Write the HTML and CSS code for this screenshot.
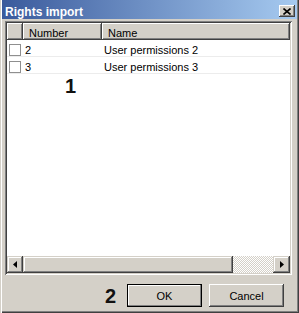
FILE: index.html
```
<!DOCTYPE html>
<html lang="en">
<head>
  <meta charset="UTF-8">
  <title>Rights import</title>
  <link rel="stylesheet" href="styles.css">
</head>
<body>
  <div class="window">
    <div class="titlebar">
      <span class="title">Rights import</span>
      <button class="close" aria-label="Close">
        <svg width="8" height="7" viewBox="0 0 8 7">
          <path d="M0.5 0.5L7.5 6.5M7.5 0.5L0.5 6.5" stroke="#000" stroke-width="1.6" fill="none"/>
        </svg>
      </button>
    </div>

    <div class="content">
      <div class="listview">
        <div class="lv-header">
          <div class="lv-col"></div>
          <div class="lv-col">Number</div>
          <div class="lv-col">Name</div>
        </div>

        <div class="lv-rows">
          <div class="lv-row">
            <span class="cell"><span class="checkbox"></span></span>
            <span class="cell">2</span>
            <span class="cell">User permissions 2</span>
          </div>
          <div class="lv-row">
            <span class="cell"><span class="checkbox"></span></span>
            <span class="cell">3</span>
            <span class="cell">User permissions 3</span>
          </div>
        </div>

        <div class="hscroll">
          <div class="sb-btn">
            <svg width="4" height="7" viewBox="0 0 4 7"><polygon points="4,0 4,7 0,3.5" fill="#000"/></svg>
          </div>
          <div class="sb-thumb"></div>
          <div class="sb-track"></div>
          <div class="sb-btn sb-right">
            <svg width="4" height="7" viewBox="0 0 4 7"><polygon points="0,0 0,7 4,3.5" fill="#000"/></svg>
          </div>
        </div>

        <span class="marker marker-list">1</span>
      </div>

      <div class="footer">
        <span class="marker marker-footer">2</span>
        <button class="btn btn-default">OK</button>
        <button class="btn">Cancel</button>
      </div>
    </div>
  </div>
</body>
</html>
```

FILE: styles.css
```
*, *::before, *::after {
  box-sizing: border-box;
}

body {
  margin: 0;
  font-family: "Liberation Sans", Arial, sans-serif;
  font-size: 11px;
  color: #000;
}

/* window frame */
.window {
  width: 299px;
  height: 313px;
  background: #d4d0c8;
  display: flex;
  flex-direction: column;
  padding: 0 2px 2px 2px;
  box-shadow: inset 1px 0 #d4d0c8, inset 2px 0 #fff,
              inset -1px -1px #404040, inset -2px -2px #808080;
}

.titlebar {
  height: 19px;
  flex: none;
  display: flex;
  align-items: flex-start;
  padding-left: 3px;
  background: linear-gradient(to right, #3a5a9c, #a6caf0);
}

.title {
  flex: 1;
  color: #fff;
  font-weight: bold;
  font-size: 12px;
  line-height: 14px;
  padding-top: 5px;
}

.close {
  width: 16px;
  height: 12px;
  margin: 5px 2px 0 0;
  padding: 0;
  border: none;
  background: #d4d0c8;
  display: flex;
  align-items: center;
  justify-content: center;
  box-shadow: inset -1px -1px #404040, inset 1px 1px #fff, inset -2px -2px #808080;
}

.close svg {
  display: block;
}

.content {
  flex: 1;
  display: flex;
  flex-direction: column;
  padding: 2px 5px 0 3px;
}

/* list view */
.listview {
  position: relative;
  height: 254px;
  flex: none;
  display: flex;
  flex-direction: column;
  padding: 2px;
  background: #fff;
  box-shadow: inset 1px 1px #808080, inset -1px -1px #fff,
              inset 2px 2px #404040, inset -2px -2px #d4d0c8;
}

.lv-header,
.lv-row {
  display: grid;
  grid-template-columns: 16px 79px 1fr;
}

.lv-header {
  height: 17px;
  flex: none;
}

.lv-col {
  background: #d4d0c8;
  padding: 3px 0 0 6px;
  line-height: 14px;
  white-space: nowrap;
  box-shadow: inset -1px -1px #404040, inset 1px 1px #fff, inset -2px -2px #808080;
}

.lv-rows {
  flex: 1;
}

.lv-row {
  height: 17px;
  border-bottom: 1px solid #ececec;
  line-height: 14px;
}

.cell {
  padding: 3px 0 0 2px;
  white-space: nowrap;
}

.checkbox {
  display: block;
  width: 12px;
  height: 12px;
  margin: 1px 0 0 0;
  border: 1px solid #8f8f8f;
  background: #fff;
}

/* horizontal scrollbar */
.hscroll {
  height: 17px;
  flex: none;
  display: flex;
}

.sb-btn,
.sb-thumb {
  background: #d4d0c8;
  box-shadow: inset -1px -1px #404040, inset 1px 1px #d4d0c8,
              inset -2px -2px #808080, inset 2px 2px #fff;
}

.sb-btn {
  width: 16px;
  display: flex;
  align-items: center;
  justify-content: center;
}

.sb-right {
  width: 17px;
}

.sb-btn svg {
  display: block;
}

.sb-thumb {
  width: 210px;
}

.sb-track {
  flex: 1;
  background-color: #d4d0c8;
  background-image: conic-gradient(#fff 25%, #d4d0c8 0 50%, #fff 0 75%, #d4d0c8 0);
  background-size: 2px 2px;
}

/* callout numbers */
.marker {
  font-weight: bold;
  font-size: 20px;
  line-height: 20px;
  color: #111;
}

.marker-list {
  position: absolute;
  left: 60px;
  top: 55px;
}

.marker-footer {
  margin-right: 11px;
}

/* buttons */
.footer {
  display: flex;
  align-items: center;
  justify-content: flex-end;
  margin-top: 9px;
  padding-right: 8px;
}

.btn {
  width: 75px;
  height: 23px;
  padding: 0;
  border: none;
  background: #d4d0c8;
  font: inherit;
  color: #000;
  box-shadow: inset -1px -1px #404040, inset 1px 1px #fff, inset -2px -2px #808080;
}

.btn + .btn {
  margin-left: 7px;
}

.btn-default {
  border: 1px solid #000;
  box-shadow: inset -1px -1px #808080, inset 1px 1px #fff;
}
```
